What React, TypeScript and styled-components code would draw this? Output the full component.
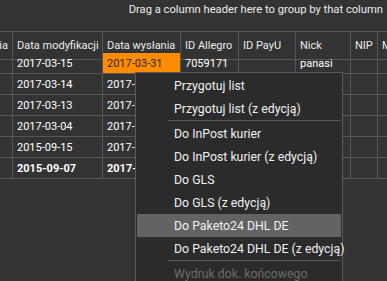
import styled, { createGlobalStyle, css } from "styled-components";

const GlobalStyle = createGlobalStyle`
  html, body {
    margin: 0;
    padding: 0;
    background: #333333;
  }

  body {
    font-family: "Segoe UI", Roboto, "Open Sans", sans-serif;
    font-size: 11px;
    color: #f0f0f0;
    overflow: hidden;
  }
`;

const columns = [
  { title: "Data utworzenia", width: 13 },
  { title: "Data modyfikacji", width: 90 },
  { title: "Data wysłania", width: 78 },
  { title: "ID Allegro", width: 58 },
  { title: "ID PayU", width: 57 },
  { title: "Nick", width: 55 },
  { title: "NIP", width: 27 },
  { title: "Miasto", width: 60 },
];

interface RowData {
  modified: string;
  sent: string;
  allegro?: string;
  nick?: string;
  bold?: boolean;
  highlight?: boolean;
}

const rows: RowData[] = [
  { modified: "2017-03-15", sent: "2017-03-31", allegro: "7059171", nick: "panasi", highlight: true },
  { modified: "2017-03-14", sent: "2017-03-31" },
  { modified: "2017-03-13", sent: "2017-03-31" },
  { modified: "2017-03-04", sent: "2017-03-31" },
  { modified: "2015-09-15", sent: "2017-03-31" },
  { modified: "2015-09-07", sent: "2017-03-31", bold: true },
];

type MenuEntry = { label: string; active?: boolean; disabled?: boolean } | "separator";

const menu: MenuEntry[] = [
  { label: "Przygotuj list" },
  { label: "Przygotuj list (z edycją)" },
  "separator",
  { label: "Do InPost kurier" },
  { label: "Do InPost kurier (z edycją)" },
  { label: "Do GLS" },
  { label: "Do GLS (z edycją)" },
  { label: "Do Paketo24 DHL DE", active: true },
  { label: "Do Paketo24 DHL DE (z edycją)" },
  "separator",
  { label: "Wydruk dok. końcowego", disabled: true },
];

const template = columns.map((c) => `${c.width}px`).join(" ");

export default function App() {
  return (
    <Page>
      <GlobalStyle />
      <GroupPanel>Drag a column header here to group by that column</GroupPanel>
      <Grid style={{ gridTemplateColumns: template }}>
        {columns.map((c, i) => (
          <HeaderCell key={c.title} $first={i === 0}>
            {c.title}
          </HeaderCell>
        ))}
        {rows.map((r, ri) => (
          <Row key={ri} $bold={r.bold}>
            <Cell />
            <Cell>{r.modified}</Cell>
            <Cell $highlight={r.highlight}>{r.sent}</Cell>
            <Cell>{r.allegro}</Cell>
            <Cell />
            <Cell>{r.nick}</Cell>
            <Cell />
            <Cell />
          </Row>
        ))}
      </Grid>

      <ContextMenu>
        {menu.map((m, i) =>
          m === "separator" ? (
            <Separator key={i} />
          ) : (
            <MenuItem key={i} $active={m.active} $disabled={m.disabled}>
              {m.label}
            </MenuItem>
          )
        )}
      </ContextMenu>
    </Page>
  );
}

const Page = styled.div`
  position: relative;
  width: 387px;
  height: 281px;
  overflow: hidden;
  background: #333333;
`;

const GroupPanel = styled.div`
  display: flex;
  align-items: flex-start;
  justify-content: flex-end;
  height: 32px;
  padding: 3px 4px 0 0;
  box-sizing: border-box;
  border-bottom: 1px solid #575757;
  font-size: 11.2px;
  color: #ebebeb;
  white-space: nowrap;
`;

const Grid = styled.div`
  display: grid;
  grid-auto-rows: 21px;
  width: max-content;
`;

const HeaderCell = styled.div<{ $first?: boolean }>`
  display: flex;
  align-items: center;
  justify-content: ${({ $first }) => ($first ? "flex-end" : "flex-start")};
  height: 28px;
  padding: 0 4px;
  box-sizing: border-box;
  border-right: 1px solid #575757;
  border-bottom: 1px solid #575757;
  color: #ececec;
  white-space: nowrap;
  overflow: hidden;
`;

const Row = styled.div<{ $bold?: boolean }>`
  display: contents;
  font-weight: ${({ $bold }) => ($bold ? 700 : 400)};
`;

const Cell = styled.div<{ $highlight?: boolean }>`
  display: flex;
  align-items: center;
  padding: 1px 4px 0;
  box-sizing: border-box;
  border-right: 1px solid #575757;
  border-bottom: 1px solid #575757;
  white-space: nowrap;
  overflow: hidden;
  color: #ffffff;

  ${({ $highlight }) =>
    $highlight &&
    css`
      background: #ff8c00;
      color: #2a2a2a;
    `}
`;

const ContextMenu = styled.div`
  position: absolute;
  left: 135px;
  top: 72px;
  width: 208px;
  padding: 1px;
  box-sizing: border-box;
  background: #2b2b2b;
  border: 1px solid #5c5c5c;
  display: flex;
  flex-direction: column;
`;

const MenuItem = styled.div<{ $active?: boolean; $disabled?: boolean }>`
  display: flex;
  align-items: center;
  height: 23px;
  padding-left: 37px;
  font-size: 12.3px;
  white-space: nowrap;
  color: ${({ $disabled }) => ($disabled ? "#6c6c6c" : "#f0f0f0")};
  background: ${({ $active }) => ($active ? "#636363" : "transparent")};
`;

const Separator = styled.div`
  height: 1px;
  margin: 0 1px 1px 31px;
  background: #5c5c5c;
`;
